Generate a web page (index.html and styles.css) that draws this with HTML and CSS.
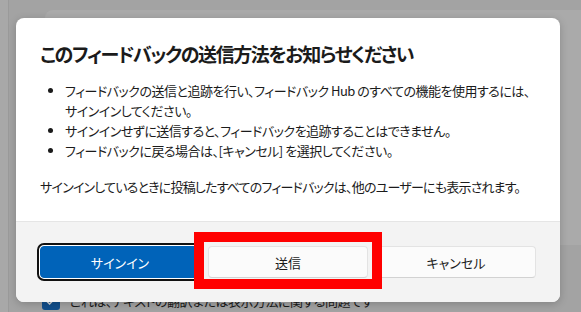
FILE: index.html
```html
<html>
    <head>
        <meta charset="utf-8">
        <title>Feedback Hub</title>
        <link rel="stylesheet" href="styles.css">
    </head>
    <body>
        <!-- ダイアログの後ろの画面 -->
        <div class="Fondo">
            <div class="Barra"></div>
            <div class="Principal">
                <div class="Tarjeta"></div>
                <div class="Fila">
                    <span class="Casilla">
                        <svg width="12" height="12" viewBox="0 0 12 12"><path d="M2 6.5l2.6 2.6L10 3.5" fill="none" stroke="#d8d8d8" stroke-width="1.4"/></svg>
                    </span>
                    <span class="Fila_Texto">これは、テキストの翻訳または表示方法に関する問題です</span>
                </div>
            </div>
        </div>

        <!-- ダイアログ -->
        <div class="Dialogo">
            <div class="Contenido">
                <h1>このフィードバックの送信方法をお知らせください</h1>
                <ul>
                    <li>フィードバックの送信と追跡を行い、フィードバック Hub のすべての機能を使用するには、サインインしてください。</li>
                    <li>サインインせずに送信すると、フィードバックを追跡することはできません。</li>
                    <li>フィードバックに戻る場合は、[キャンセル] を選択してください。</li>
                </ul>
                <p>サインインしているときに投稿したすべてのフィードバックは、他のユーザーにも表示されます。</p>
            </div>
            <div class="Pie">
                <button class="Boton Primario">サインイン</button>
                <div class="Marcado">
                    <button class="Boton">送信</button>
                    <span class="Rojo"></span>
                </div>
                <button class="Boton">キャンセル</button>
            </div>
        </div>
    </body>
</html>
```

FILE: styles.css
```css
html, body{
    margin: 0;
    width: 581px;
    height: 312px;
    overflow: hidden;
}

body{
    background-color: #a3a3a3;
    font-family: "Noto Sans CJK JP", sans-serif;
    font-feature-settings: "palt";
    color: #1b1b1b;
    position: relative;
}

.Fondo{
    display: flex;
    height: 312px;
}

.Barra{
    width: 8px;
    background-color: #a8a8a8;
    border-right: 1px solid #9a9a9a;
}

.Principal{
    flex: 1;
    padding-top: 10px;
}

.Tarjeta{
    margin-left: 36px;
    height: 235px;
    background-color: #aaaaaa;
    border-top-left-radius: 8px;
}

.Fila{
    display: flex;
    align-items: center;
    gap: 10px;
    margin-top: 46px;
    margin-left: 33px;
}

.Casilla{
    width: 18px;
    height: 18px;
    border-radius: 3px;
    background-color: #114f8c;
    display: flex;
    justify-content: center;
    align-items: center;
}

.Fila_Texto{
    font-size: 13px;
    letter-spacing: -0.5px;
    color: #1a1a1a;
    line-height: 20px;
}

.Dialogo{
    position: absolute;
    left: 16px;
    top: 18px;
    width: 544px;
    height: 284px;
    background-color: white;
    border-radius: 8px;
    overflow: hidden;
    display: flex;
    flex-direction: column;
    box-shadow: 0 2px 8px rgba(0, 0, 0, 0.2);
}

.Contenido{
    flex: 1;
    padding: 22px 24px 0 24px;
}

h1{
    margin: 0;
    font-size: 19px;
    font-weight: 600;
    letter-spacing: -1.4px;
    line-height: 28px;
}

ul{
    margin: 13px 0 0 0;
    padding-left: 25px;
    font-size: 13px;
    letter-spacing: -0.5px;
    line-height: 20px;
}

li::marker{
    font-size: 13px;
}

p{
    margin: 16px 0 0 0;
    font-size: 13px;
    letter-spacing: -0.8px;
    line-height: 20px;
}

.Pie{
    height: 80px;
    background-color: #f3f3f3;
    border-top: 1px solid #e5e5e5;
    padding: 0 24px;
    display: grid;
    grid-template-columns: 1fr 1fr 1fr;
    gap: 8px;
    align-items: center;
}

.Boton{
    height: 32px;
    border: 1px solid #e3e3e3;
    border-bottom-color: #d2d2d2;
    border-radius: 4px;
    background-color: #fbfbfb;
    font-family: inherit;
    font-feature-settings: "palt";
    font-size: 13px;
    color: #1b1b1b;
    width: 100%;
}

.Primario{
    background-color: #0063b9;
    border-color: #0063b9;
    color: white;
    outline: 2px solid #111;
    outline-offset: 1px;
    box-shadow: 0 0 0 1px white;
}

.Marcado{
    position: relative;
    height: 32px;
}

.Rojo{
    position: absolute;
    left: -14px;
    right: -14px;
    top: -14px;
    bottom: -11px;
    border: 10px solid #ff0000;
}
```
